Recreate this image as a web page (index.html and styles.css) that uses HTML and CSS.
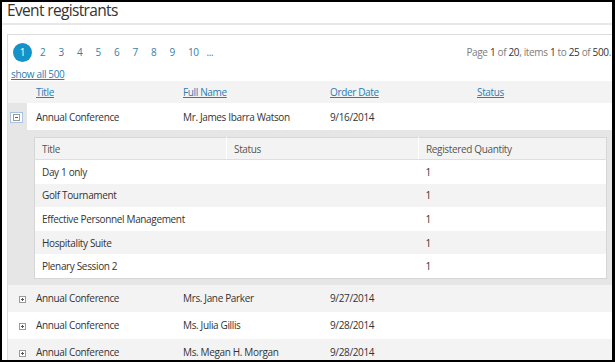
FILE: index.html
```html
<!DOCTYPE html>
<html lang="en">
<head>
    <meta charset="UTF-8">
    <title>Event registrants</title>
    <link rel="stylesheet" href="styles.css">
</head>
<body>
    <div class="frame">
        <h1 class="page-title">Event registrants</h1>

        <div class="grid">
            <div class="pager">
                <div class="pager-numbers">
                    <a class="page current">1</a>
                    <a class="page">2</a>
                    <a class="page">3</a>
                    <a class="page">4</a>
                    <a class="page">5</a>
                    <a class="page">6</a>
                    <a class="page">7</a>
                    <a class="page">8</a>
                    <a class="page">9</a>
                    <a class="page">10</a>
                    <a class="page">...</a>
                </div>
                <div class="pager-info">
                    Page <b>1</b> of <b>20</b>, items <b>1</b> to <b>25</b> of <b>500</b>.
                </div>
            </div>
            <a class="show-all">show all 500</a>

            <table class="master">
                <colgroup>
                    <col class="c-expand">
                    <col class="c-data">
                    <col class="c-data">
                    <col class="c-data">
                    <col>
                </colgroup>
                <thead>
                    <tr>
                        <th></th>
                        <th><a>Title</a></th>
                        <th><a>Full Name</a></th>
                        <th><a>Order Date</a></th>
                        <th><a>Status</a></th>
                    </tr>
                </thead>
                <tbody>
                    <tr class="expanded">
                        <td class="expand-cell">
                            <span class="toggle open">
                                <svg width="7" height="7" viewBox="0 0 7 7"><rect x="0.5" y="0.5" width="6" height="6" fill="#fff" stroke="#9a9a9a"/><path d="M2 3.5h3" stroke="#555"/></svg>
                            </span>
                        </td>
                        <td>Annual Conference</td>
                        <td>Mr. James Ibarra Watson</td>
                        <td>9/16/2014</td>
                        <td></td>
                    </tr>
                    <tr class="detail-row">
                        <td class="expand-cell"></td>
                        <td colspan="4" class="detail-cell">
                            <table class="detail">
                                <colgroup>
                                    <col class="d-col">
                                    <col class="d-col">
                                    <col>
                                </colgroup>
                                <thead>
                                    <tr>
                                        <th>Title</th>
                                        <th>Status</th>
                                        <th>Registered Quantity</th>
                                    </tr>
                                </thead>
                                <tbody>
                                    <tr><td>Day 1 only</td><td></td><td>1</td></tr>
                                    <tr class="alt"><td>Golf Tournament</td><td></td><td>1</td></tr>
                                    <tr><td>Effective Personnel Management</td><td></td><td>1</td></tr>
                                    <tr class="alt"><td>Hospitality Suite</td><td></td><td>1</td></tr>
                                    <tr><td>Plenary Session 2</td><td></td><td>1</td></tr>
                                </tbody>
                            </table>
                        </td>
                    </tr>
                    <tr class="alt">
                        <td class="plain-cell">
                            <span class="toggle">
                                <svg width="7" height="7" viewBox="0 0 7 7"><rect x="0.5" y="0.5" width="6" height="6" fill="#fff" stroke="#9a9a9a"/><path d="M2 3.5h3M3.5 2v3" stroke="#555"/></svg>
                            </span>
                        </td>
                        <td>Annual Conference</td>
                        <td>Mrs. Jane Parker</td>
                        <td>9/27/2014</td>
                        <td></td>
                    </tr>
                    <tr>
                        <td class="plain-cell">
                            <span class="toggle">
                                <svg width="7" height="7" viewBox="0 0 7 7"><rect x="0.5" y="0.5" width="6" height="6" fill="#fff" stroke="#9a9a9a"/><path d="M2 3.5h3M3.5 2v3" stroke="#555"/></svg>
                            </span>
                        </td>
                        <td>Annual Conference</td>
                        <td>Ms. Julia Gillis</td>
                        <td>9/28/2014</td>
                        <td></td>
                    </tr>
                    <tr class="alt">
                        <td class="plain-cell">
                            <span class="toggle">
                                <svg width="7" height="7" viewBox="0 0 7 7"><rect x="0.5" y="0.5" width="6" height="6" fill="#fff" stroke="#9a9a9a"/><path d="M2 3.5h3M3.5 2v3" stroke="#555"/></svg>
                            </span>
                        </td>
                        <td>Annual Conference</td>
                        <td>Ms. Megan H. Morgan</td>
                        <td>9/28/2014</td>
                        <td></td>
                    </tr>
                </tbody>
            </table>
        </div>
    </div>
</body>
</html>
```

FILE: styles.css
```css
html, body {
    margin: 0;
    background: #fff;
}
body {
    font-family: "Open Sans", "Liberation Sans", sans-serif;
    font-size: 10px;
    letter-spacing: -0.35px;
    color: #333;
}
.frame {
    box-sizing: border-box;
    width: 615px;
    height: 362px;
    border: 2px solid #000;
    border-right-width: 3px;
    overflow: hidden;
}
.page-title {
    margin: 0;
    padding: 0 0 0 5px;
    height: 21px;
    line-height: 17px;
    font-size: 15.5px;
    letter-spacing: -0.65px;
    font-weight: normal;
    color: #333;
    border-bottom: 2px solid #e8e8e8;
}
.grid {
    margin: 9px 0 0 5px;
    border-top: 1px solid #dcdcdc;
    border-left: 1px solid #dcdcdc;
}

/* pager */
.pager {
    display: flex;
    justify-content: space-between;
    align-items: center;
    padding: 7px 1px 0 5px;
    height: 20px;
}
.pager-numbers {
    display: flex;
    align-items: center;
}
.page {
    width: 18.5px;
    color: #3a7ea8;
}
.page.current {
    width: 19px;
    height: 19px;
    line-height: 19px;
    border-radius: 50%;
    background: #1593c9;
    color: #fff;
    text-align: center;
    margin-right: 8px;
}
.pager-info {
    color: #7d7d7d;
}
.pager-info b {
    font-weight: normal;
    color: #333;
}
.show-all {
    display: block;
    margin: 6px 0 0 3px;
    color: #2d7bb0;
    text-decoration: underline;
    line-height: 12px;
}

/* master table */
.master {
    margin-top: 1px;
    width: 100%;
    border-collapse: collapse;
}
.c-expand {
    width: 19px;
}
.c-data {
    width: 147px;
}
.master th {
    background: #f3f3f3;
    height: 22px;
    padding: 0 0 0 9px;
    text-align: left;
    font-weight: normal;
}
.master th a {
    color: #2d7bb0;
    text-decoration: underline;
}
.master td {
    height: 27px;
    padding: 0 0 0 9px;
    white-space: nowrap;
}
.master tr.alt td {
    background: #f3f3f3;
}
.master td.expand-cell {
    background: #e6e6e6;
    padding: 0 0 0 2px;
}
.master td.plain-cell {
    padding: 0 0 0 11px;
}
.toggle {
    display: inline-flex;
    align-items: center;
    justify-content: center;
    width: 7px;
    height: 7px;
    vertical-align: middle;
}
.toggle.open {
    box-sizing: border-box;
    width: 13px;
    height: 11px;
    border: 1px solid #a9c3e3;
    background: #fff;
}
.toggle svg {
    display: block;
}

/* detail table */
.master td.detail-cell {
    background: #e6e6e6;
    padding: 7px 5px 6px 7px;
}
.detail {
    width: 100%;
    border-collapse: collapse;
    border: 1px solid #d6d6d6;
    background: #fff;
}
.d-col {
    width: 192px;
}
.detail th {
    background: #f3f3f3;
    height: 21px;
    padding: 0 0 0 7px;
    text-align: left;
    font-weight: normal;
    color: #555;
    border-left: 1px solid #fff;
    border-bottom: 1px solid #dedede;
}
.detail th:first-child {
    border-left: none;
}
.detail td {
    height: 23.6px;
    padding: 0 0 0 7px;
}
.detail tr.alt td {
    background: #f3f3f3;
}
```
